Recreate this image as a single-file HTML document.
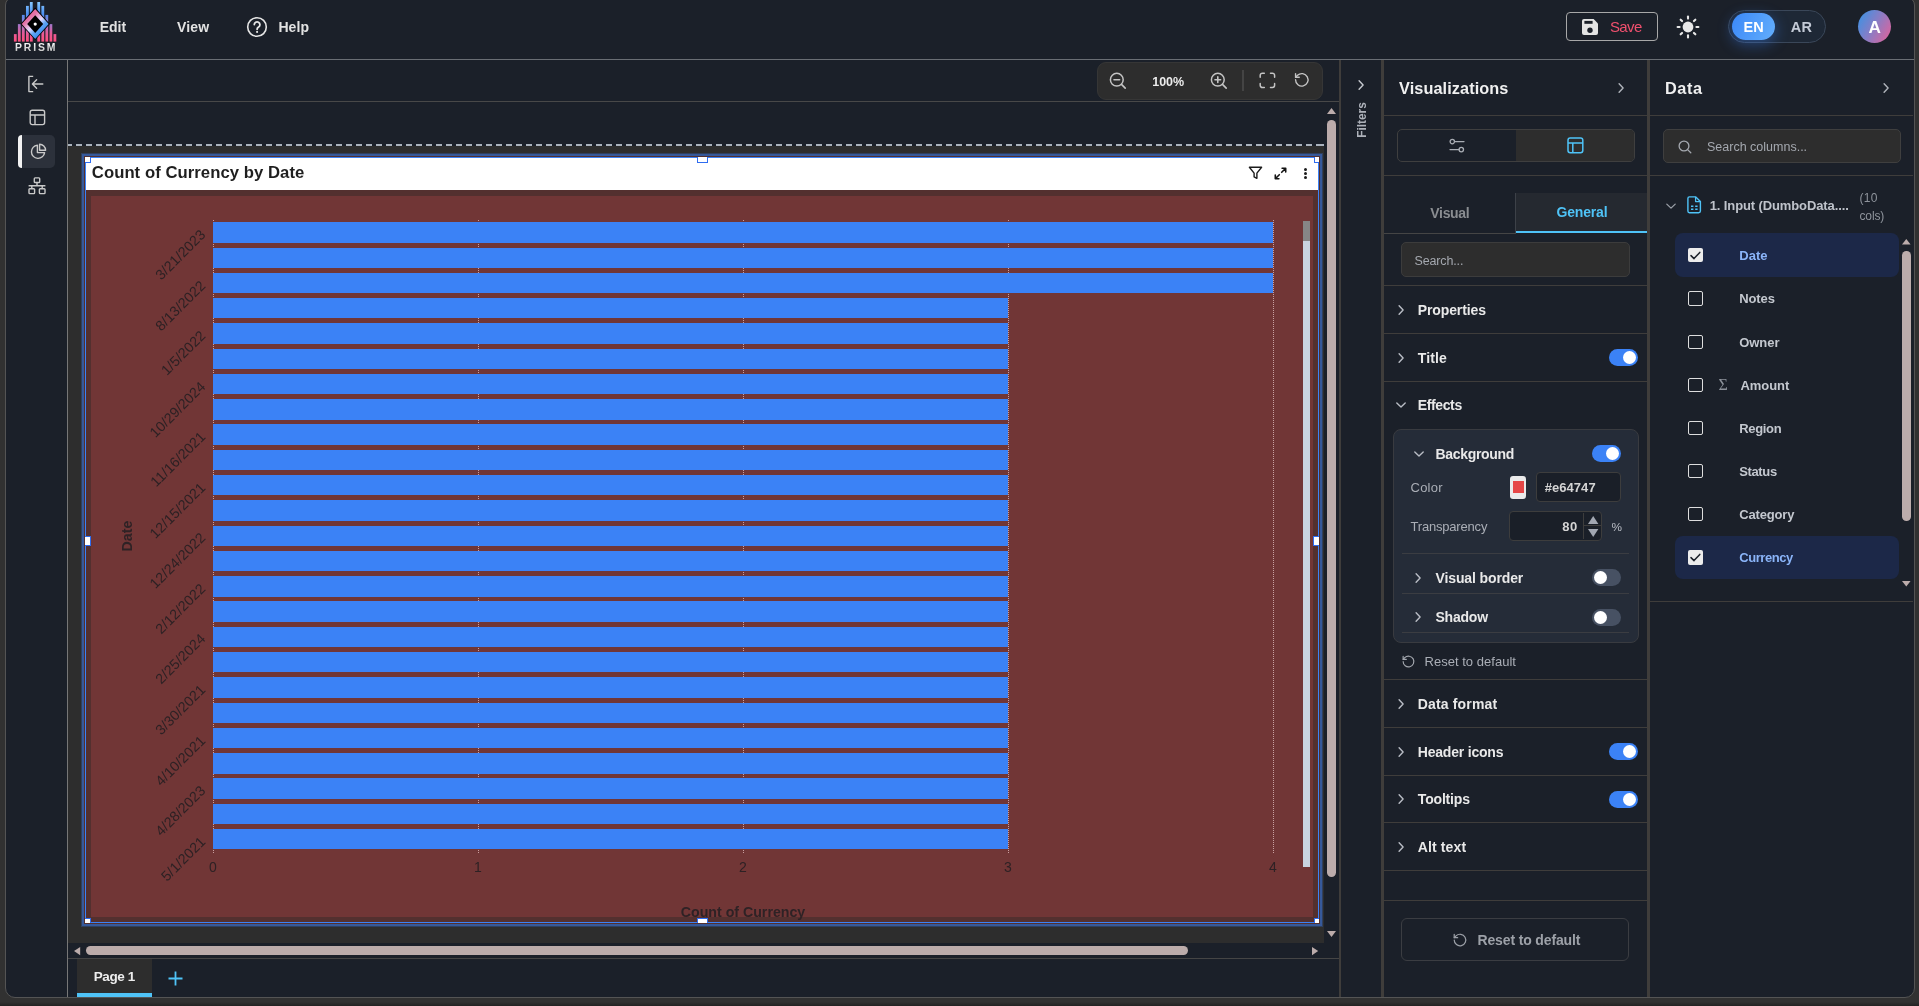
<!DOCTYPE html>
<html lang="en"><head><meta charset="utf-8"><title>PRISM</title>
<style>
html,body{margin:0;padding:0}
body{width:1919px;height:1006px;overflow:hidden;position:relative;background:#313131;font-family:"Liberation Sans", sans-serif;}
#root{position:absolute;left:0;top:0;width:1919px;height:1006px;will-change:transform}
#root>div,#root>svg,.a{position:absolute;box-sizing:border-box}
.t{position:absolute}
svg{overflow:visible}
</style></head><body>
<div id="root">
<div style="left:0;top:1002px;width:1919px;height:4px;background:linear-gradient(#313131,#222)"></div>
<div style="left:5px;top:-3px;width:1910px;height:1001px;border:1px solid #545454;border-radius:8px 8px 10px 10px;background:#1b2029"></div>
<div style="left:6px;top:59px;width:1908px;height:1px;background:#6a6e74;"></div>
<div style="left:67px;top:60px;width:1px;height:937px;background:#777;"></div>
<div style="left:68px;top:101px;width:1271px;height:1px;background:#484848;"></div>
<div style="left:1339px;top:60px;width:2px;height:937px;background:#3f3d3b;"></div>
<div style="left:1381px;top:60px;width:3px;height:937px;background:#3f3d3b;"></div>
<div style="left:1647px;top:60px;width:3px;height:937px;background:#3f3d3b;"></div>
<svg style="left:0px;top:0px;" width="70" height="58" viewBox="0 0 70 58" fill="none"><defs>
<linearGradient id="lgb" gradientUnits="userSpaceOnUse" x1="0" y1="2" x2="0" y2="41.6">
<stop offset="0" stop-color="#86c8ff"/><stop offset="0.3" stop-color="#4a8ff2"/><stop offset="0.55" stop-color="#9a78cc"/><stop offset="0.8" stop-color="#e85a96"/><stop offset="1" stop-color="#ff4f7e"/></linearGradient>
<linearGradient id="lgd" gradientUnits="userSpaceOnUse" x1="26" y1="14" x2="44" y2="34">
<stop offset="0" stop-color="#e5609b"/><stop offset="0.22" stop-color="#e474a8"/><stop offset="0.52" stop-color="#e4dcff"/><stop offset="0.72" stop-color="#5fa4f4"/><stop offset="1" stop-color="#2f86ea"/></linearGradient>
<linearGradient id="lgt" x1="0" y1="0" x2="0" y2="1"><stop offset="0" stop-color="#ffffff"/><stop offset="1" stop-color="#b9b9b9"/></linearGradient>
</defs><rect x="13.9" y="34.1" width="2.8" height="7.5" fill="url(#lgb)"/><rect x="17.9" y="24.1" width="2.8" height="17.5" fill="url(#lgb)"/><rect x="21.9" y="14.9" width="2.8" height="26.7" fill="url(#lgb)"/><rect x="26.0" y="5.9" width="2.8" height="35.7" fill="url(#lgb)"/><rect x="29.9" y="2.0" width="2.8" height="39.6" fill="url(#lgb)"/><rect x="37.3" y="2.0" width="2.8" height="39.6" fill="url(#lgb)"/><rect x="41.4" y="5.9" width="2.8" height="35.7" fill="url(#lgb)"/><rect x="45.4" y="14.9" width="2.8" height="26.7" fill="url(#lgb)"/><rect x="49.5" y="24.1" width="2.8" height="17.5" fill="url(#lgb)"/><rect x="53.5" y="34.1" width="2.8" height="7.5" fill="url(#lgb)"/><polygon points="35.2,7.6 49.9,24 35.2,40 20.5,24" fill="#000"/><polygon points="35.2,9 48.7,24 35.2,38.9 21.7,24" fill="url(#lgd)"/><polygon points="35.2,15.2 43.2,24 35.2,32.9 27.2,24" fill="#000"/><circle cx="35.2" cy="24.1" r="1.6" fill="#fff"/><text x="15" y="51" font-family='"Liberation Sans", sans-serif' font-size="10.4" font-weight="700" letter-spacing="1.9" fill="url(#lgt)">PRISM</text></svg>
<div id="m_edit" class="t" style="left:99.8px;top:16.7px;height:20px;line-height:20px;font-size:14px;font-weight:700;color:#e2e2e2;letter-spacing:-0.037px;white-space:nowrap;">Edit</div>
<div id="m_view" class="t" style="left:176.9px;top:16.7px;height:20px;line-height:20px;font-size:14px;font-weight:700;color:#e2e2e2;letter-spacing:0.162px;white-space:nowrap;">View</div>
<svg style="left:246px;top:16px;" width="22" height="22" viewBox="0 0 22 22" fill="none"><circle cx="11" cy="11" r="9.3" stroke="#e6e6e6" stroke-width="1.6"/><path d="M8.3 8.6a2.8 2.8 0 1 1 4.3 2.4c-.9.6-1.5 1.1-1.5 2.2" stroke="#e6e6e6" stroke-width="1.8" stroke-linecap="round"/><circle cx="11.1" cy="15.9" r="1.05" fill="#e6e6e6"/></svg>
<div id="m_help" class="t" style="left:278.4px;top:16.7px;height:20px;line-height:20px;font-size:14px;font-weight:700;color:#e2e2e2;letter-spacing:0.115px;white-space:nowrap;">Help</div>
<div style="left:1566px;top:12px;width:92px;height:29px;border:1px solid #a8a8a8;border-radius:4px"></div>
<svg style="left:1582px;top:19px;" width="16" height="16" viewBox="0 0 16 16" fill="none"><path d="M0 2a2 2 0 0 1 2-2h9.6L16 4.4V14a2 2 0 0 1-2 2H2a2 2 0 0 1-2-2z" fill="#e4e4e4"/><rect x="2.4" y="1.9" width="8.2" height="2.9" fill="#1b2029"/><circle cx="8" cy="11.2" r="2.7" fill="#1b2029"/></svg>
<div id="save" class="t" style="left:1609.9px;top:17.0px;height:20px;line-height:20px;font-size:15px;font-weight:400;color:#f0506e;letter-spacing:-0.6px;white-space:nowrap;">Save</div>
<svg style="left:1676.3px;top:14.6px;" width="24" height="24" viewBox="0 0 24 24" fill="none"><circle cx="12" cy="12" r="5.4" fill="#e8e8e8"/><line x1="20.40" y1="12.00" x2="22.40" y2="12.00" stroke="#e8e8e8" stroke-width="2.1" stroke-linecap="round"/><line x1="17.94" y1="17.94" x2="19.35" y2="19.35" stroke="#e8e8e8" stroke-width="2.1" stroke-linecap="round"/><line x1="12.00" y1="20.40" x2="12.00" y2="22.40" stroke="#e8e8e8" stroke-width="2.1" stroke-linecap="round"/><line x1="6.06" y1="17.94" x2="4.65" y2="19.35" stroke="#e8e8e8" stroke-width="2.1" stroke-linecap="round"/><line x1="3.60" y1="12.00" x2="1.60" y2="12.00" stroke="#e8e8e8" stroke-width="2.1" stroke-linecap="round"/><line x1="6.06" y1="6.06" x2="4.65" y2="4.65" stroke="#e8e8e8" stroke-width="2.1" stroke-linecap="round"/><line x1="12.00" y1="3.60" x2="12.00" y2="1.60" stroke="#e8e8e8" stroke-width="2.1" stroke-linecap="round"/><line x1="17.94" y1="6.06" x2="19.35" y2="4.65" stroke="#e8e8e8" stroke-width="2.1" stroke-linecap="round"/></svg>
<div style="left:1728px;top:10px;width:98px;height:33px;border:1px solid #3a4759;border-radius:17px;background:#1e2836"></div>
<div style="left:1732px;top:13px;width:43px;height:27px;border-radius:13.5px;background:linear-gradient(115deg,#3b88f8,#63aefc);box-shadow:0 4px 14px 1px rgba(59,130,246,.38)"></div>
<div id="l_en" class="t" style="left:1743.4px;top:17.0px;height:20px;line-height:20px;font-size:14.5px;font-weight:700;color:#fff;letter-spacing:0.225px;white-space:nowrap;">EN</div>
<div id="l_ar" class="t" style="left:1790.8px;top:17.0px;height:20px;line-height:20px;font-size:14.5px;font-weight:700;color:#c3cad6;letter-spacing:0.327px;white-space:nowrap;">AR</div>
<div style="left:1857.7px;top:9.5px;width:33.5px;height:33.5px;border-radius:50%;background:linear-gradient(120deg,#3c92e4 5%,#8b7cc4 50%,#e0639b 95%)"></div>
<div id="av" class="t" style="left:1868.5px;top:16.7px;height:20px;line-height:20px;font-size:17.2px;font-weight:700;color:#fff;letter-spacing:0.488px;white-space:nowrap;">A</div>
<svg style="left:27px;top:75px;" width="18" height="18" viewBox="0 0 18 18" fill="none"><path d="M6.2 1.4H1.9v15.2h4.3" stroke="#c9c9c9" stroke-width="1.4" stroke-linejoin="round"/><path d="M15.8 9H5.6M9.6 4.8L5.4 9l4.2 4.2" stroke="#c9c9c9" stroke-width="1.4" stroke-linecap="round" stroke-linejoin="round"/></svg>
<svg style="left:28.6px;top:109.2px;" width="17" height="17" viewBox="0 0 17 17" fill="none"><rect x="1.2" y="1.2" width="14.4" height="14.4" rx="2" stroke="#c9c9c9" stroke-width="1.4"/><path d="M1.2 6h14.4M6 6v9.6" stroke="#c9c9c9" stroke-width="1.4"/></svg>
<div style="left:18px;top:135px;width:37px;height:33px;border-radius:5px;background:#2c313b"></div>
<div style="left:18px;top:135px;width:4px;height:33px;border-radius:4px 0 0 4px;background:#f2f2f2"></div>
<svg style="left:30px;top:143px;" width="17" height="17" viewBox="0 0 17 17" fill="none"><path d="M7.4 2.2A6.6 6.6 0 1 0 14.6 9.6H7.4z" stroke="#c9c9c9" stroke-width="1.4" stroke-linejoin="round"/><path d="M9.6 1.3a6.2 6.2 0 0 1 6 6H9.6z" stroke="#c9c9c9" stroke-width="1.4" stroke-linejoin="round"/></svg>
<svg style="left:28px;top:177px;" width="18" height="18" viewBox="0 0 18 18" fill="none"><rect x="6.3" y="0.9" width="5.4" height="4.6" rx=".8" stroke="#c9c9c9" stroke-width="1.4"/><rect x="1" y="11.8" width="5.6" height="4.8" rx=".8" stroke="#c9c9c9" stroke-width="1.4"/><rect x="11.4" y="11.8" width="5.6" height="4.8" rx=".8" stroke="#c9c9c9" stroke-width="1.4"/><path d="M9 5.5v3.2M0.6 8.7h16.8M3.8 8.7v3.1M14.2 8.7v3.1" stroke="#c9c9c9" stroke-width="1.4"/></svg>
<div style="left:1097px;top:62px;width:226px;height:38px;border-radius:9px;background:#2d2d2d;border:1px solid #363636"></div>
<svg style="left:1108px;top:71px;" width="20" height="20" viewBox="0 0 20 20" fill="none"><circle cx="8.8" cy="8.7" r="6.4" stroke="#c4c4c4" stroke-width="1.5"/><path d="M13.5 13.4l3.7 3.7M6 8.7h5.6" stroke="#c4c4c4" stroke-width="1.6" stroke-linecap="round"/></svg>
<div id="z100" class="t" style="left:1152.3px;top:71.9px;height:20px;line-height:20px;font-size:12.5px;font-weight:700;color:#ececec;letter-spacing:-0.068px;white-space:nowrap;">100%</div>
<svg style="left:1209.4px;top:71px;" width="20" height="20" viewBox="0 0 20 20" fill="none"><circle cx="8.8" cy="8.7" r="6.4" stroke="#c4c4c4" stroke-width="1.5"/><path d="M13.5 13.4l3.7 3.7M6 8.7h5.6M8.8 5.9v5.6" stroke="#c4c4c4" stroke-width="1.6" stroke-linecap="round"/></svg>
<div style="left:1242.4px;top:70.4px;width:1.2px;height:20.4px;background:#444;"></div>
<svg style="left:1258.7px;top:71.8px;" width="17" height="17" viewBox="0 0 17 17" fill="none"><path d="M1.2 5.2V3.4A2.2 2.2 0 0 1 3.4 1.2h1.9M11.5 1.2h1.9a2.2 2.2 0 0 1 2.2 2.2v1.8M15.6 11.4v1.9a2.2 2.2 0 0 1-2.2 2.2h-1.9M5.3 15.5H3.4a2.2 2.2 0 0 1-2.2-2.2v-1.9" stroke="#c4c4c4" stroke-width="1.5" stroke-linecap="round"/></svg>
<svg style="left:1294.3px;top:72.0px;" width="15.6" height="15.6" viewBox="0 0 16 16" fill="none"><path d="M1.6 8a6.4 6.4 0 1 0 2-4.6L1.6 5.4" stroke="#c4c4c4" stroke-width="1.4" stroke-linecap="round" stroke-linejoin="round"/><path d="M1.6 1.6v3.8h3.8" stroke="#c4c4c4" stroke-width="1.4" stroke-linecap="round" stroke-linejoin="round"/></svg>
<div style="left:68px;top:146px;width:1255.6px;height:797px;background:#2d2d2d;"></div>
<div style="left:68px;top:144px;width:1255.6px;height:2px;background:repeating-linear-gradient(90deg,#a9b2bd 0 6.2px,transparent 6.2px 10px);background-position:-2px 0"></div>
<svg style="left:1327px;top:108px;" width="9" height="6" viewBox="0 0 9 6" fill="none"><path d="M0 6L4.5 0 9 6z" fill="#bcacab"/></svg>
<div style="left:1327px;top:120px;width:9px;height:757px;border-radius:4.5px;background:#bcacab"></div>
<svg style="left:1327px;top:931px;" width="9" height="6" viewBox="0 0 9 6" fill="none"><path d="M0 0h9L4.5 6z" fill="#bcacab"/></svg>
<svg style="left:74px;top:946.9px;" width="6.2" height="8.2" viewBox="0 0 6.2 8.2" fill="none"><path d="M6.2 0v8.2L0 4.1z" fill="#bcacab"/></svg>
<div style="left:86px;top:946px;width:1102px;height:9px;border-radius:4.5px;background:#bcacab"></div>
<svg style="left:1312px;top:946.9px;" width="6.2" height="8.2" viewBox="0 0 6.2 8.2" fill="none"><path d="M0 0v8.2L6.2 4.1z" fill="#bcacab"/></svg>
<div style="left:68px;top:958px;width:1271px;height:1px;background:#454545;"></div>
<div style="left:77px;top:959px;width:75px;height:37px;background:#2d2d2d;"></div>
<div style="left:77px;top:992.5px;width:75px;height:4.0px;background:#4fc3f7;"></div>
<div id="page1" class="t" style="left:93.7px;top:967.0px;height:20px;line-height:20px;font-size:13.5px;font-weight:700;color:#ededed;letter-spacing:-0.407px;white-space:nowrap;">Page 1</div>
<svg style="left:167.5px;top:970.5px;" width="15" height="15" viewBox="0 0 15 15" fill="none"><path d="M7.5 .5v14M.5 7.5h14" stroke="#4fc3f7" stroke-width="1.8"/></svg>
<div style="left:82px;top:154px;width:1240px;height:772px;background:#36599a;box-shadow:0 0 0 1px rgba(54,89,154,.45);"></div>
<div style="left:84px;top:156px;width:1236px;height:768px;background:#53302f;"></div>
<div style="left:85px;top:157px;width:1234px;height:766px;border:1px solid #3b82f6"></div>
<div style="left:86px;top:158px;width:1232px;height:32px;background:#ffffff;"></div>
<div style="left:91px;top:195.8px;width:1222px;height:721.3px;background:#713636;"></div>
<div id="wtitle" class="t" style="left:91.8px;top:163.4px;height:20px;line-height:20px;font-size:16.7px;font-weight:700;color:#1f1f1f;letter-spacing:0.047px;white-space:nowrap;">Count of Currency by Date</div>
<svg style="left:1248px;top:165.5px;" width="15" height="14" viewBox="0 0 15 14" fill="none"><path d="M1.4 1.3h12.2L8.9 7.1v5.2l-2.8-1.4V7.1z" stroke="#1c1c1c" stroke-width="1.4" stroke-linejoin="round"/></svg>
<svg style="left:1273.5px;top:166.5px;" width="13" height="13" viewBox="0 0 13 13" fill="none"><path d="M7.7 5.3L11.7 1.3M8.1 1.3h3.6v3.6M5.3 7.7L1.3 11.7M4.9 11.7H1.3V8.1" stroke="#141414" stroke-width="1.6" stroke-linecap="round" stroke-linejoin="round"/></svg>
<div style="left:1303.7px;top:168.0px;width:3px;height:3px;border-radius:50%;background:#1c1c1c"></div>
<div style="left:1303.7px;top:172.0px;width:3px;height:3px;border-radius:50%;background:#1c1c1c"></div>
<div style="left:1303.7px;top:176.0px;width:3px;height:3px;border-radius:50%;background:#1c1c1c"></div>
<div style="left:213px;top:220px;width:1px;height:633px;background:repeating-linear-gradient(180deg,rgba(255,225,225,.62) 0 1px,transparent 1px 2px)"></div>
<div style="left:478px;top:220px;width:1px;height:633px;background:repeating-linear-gradient(180deg,rgba(255,225,225,.62) 0 1px,transparent 1px 2px)"></div>
<div style="left:743px;top:220px;width:1px;height:633px;background:repeating-linear-gradient(180deg,rgba(255,225,225,.62) 0 1px,transparent 1px 2px)"></div>
<div style="left:1008px;top:220px;width:1px;height:633px;background:repeating-linear-gradient(180deg,rgba(255,225,225,.62) 0 1px,transparent 1px 2px)"></div>
<div style="left:1273px;top:220px;width:1px;height:633px;background:repeating-linear-gradient(180deg,rgba(255,225,225,.62) 0 1px,transparent 1px 2px)"></div>
<div style="left:213px;top:222.23px;width:1060px;height:20.4px;background:#3b82f6;"></div>
<div style="left:213px;top:247.51px;width:1060px;height:20.4px;background:#3b82f6;"></div>
<div style="left:213px;top:272.79px;width:1060px;height:20.4px;background:#3b82f6;"></div>
<div style="left:213px;top:298.07px;width:795px;height:20.4px;background:#3b82f6;"></div>
<div style="left:213px;top:323.35px;width:795px;height:20.4px;background:#3b82f6;"></div>
<div style="left:213px;top:348.63px;width:795px;height:20.4px;background:#3b82f6;"></div>
<div style="left:213px;top:373.91px;width:795px;height:20.4px;background:#3b82f6;"></div>
<div style="left:213px;top:399.19px;width:795px;height:20.4px;background:#3b82f6;"></div>
<div style="left:213px;top:424.47px;width:795px;height:20.4px;background:#3b82f6;"></div>
<div style="left:213px;top:449.75px;width:795px;height:20.4px;background:#3b82f6;"></div>
<div style="left:213px;top:475.03px;width:795px;height:20.4px;background:#3b82f6;"></div>
<div style="left:213px;top:500.31px;width:795px;height:20.4px;background:#3b82f6;"></div>
<div style="left:213px;top:525.59px;width:795px;height:20.4px;background:#3b82f6;"></div>
<div style="left:213px;top:550.87px;width:795px;height:20.4px;background:#3b82f6;"></div>
<div style="left:213px;top:576.15px;width:795px;height:20.4px;background:#3b82f6;"></div>
<div style="left:213px;top:601.43px;width:795px;height:20.4px;background:#3b82f6;"></div>
<div style="left:213px;top:626.71px;width:795px;height:20.4px;background:#3b82f6;"></div>
<div style="left:213px;top:651.99px;width:795px;height:20.4px;background:#3b82f6;"></div>
<div style="left:213px;top:677.27px;width:795px;height:20.4px;background:#3b82f6;"></div>
<div style="left:213px;top:702.55px;width:795px;height:20.4px;background:#3b82f6;"></div>
<div style="left:213px;top:727.83px;width:795px;height:20.4px;background:#3b82f6;"></div>
<div style="left:213px;top:753.11px;width:795px;height:20.4px;background:#3b82f6;"></div>
<div style="left:213px;top:778.39px;width:795px;height:20.4px;background:#3b82f6;"></div>
<div style="left:213px;top:803.67px;width:795px;height:20.4px;background:#3b82f6;"></div>
<div style="left:213px;top:828.95px;width:795px;height:20.4px;background:#3b82f6;"></div>
<div class="t yl" style="right:1715.8px;top:223.94px;height:16px;line-height:16px;font-size:14.2px;letter-spacing:.08px;color:#2d2124;white-space:nowrap;transform-origin:100% 50%;transform:rotate(-45deg)">3/21/2023</div>
<div class="t yl" style="right:1715.8px;top:274.5px;height:16px;line-height:16px;font-size:14.2px;letter-spacing:.08px;color:#2d2124;white-space:nowrap;transform-origin:100% 50%;transform:rotate(-45deg)">8/13/2022</div>
<div class="t yl" style="right:1715.8px;top:325.06px;height:16px;line-height:16px;font-size:14.2px;letter-spacing:.08px;color:#2d2124;white-space:nowrap;transform-origin:100% 50%;transform:rotate(-45deg)">1/5/2022</div>
<div class="t yl" style="right:1715.8px;top:375.62px;height:16px;line-height:16px;font-size:14.2px;letter-spacing:.08px;color:#2d2124;white-space:nowrap;transform-origin:100% 50%;transform:rotate(-45deg)">10/29/2024</div>
<div class="t yl" style="right:1715.8px;top:426.18px;height:16px;line-height:16px;font-size:14.2px;letter-spacing:.08px;color:#2d2124;white-space:nowrap;transform-origin:100% 50%;transform:rotate(-45deg)">11/16/2021</div>
<div class="t yl" style="right:1715.8px;top:476.74px;height:16px;line-height:16px;font-size:14.2px;letter-spacing:.08px;color:#2d2124;white-space:nowrap;transform-origin:100% 50%;transform:rotate(-45deg)">12/15/2021</div>
<div class="t yl" style="right:1715.8px;top:527.3px;height:16px;line-height:16px;font-size:14.2px;letter-spacing:.08px;color:#2d2124;white-space:nowrap;transform-origin:100% 50%;transform:rotate(-45deg)">12/24/2022</div>
<div class="t yl" style="right:1715.8px;top:577.86px;height:16px;line-height:16px;font-size:14.2px;letter-spacing:.08px;color:#2d2124;white-space:nowrap;transform-origin:100% 50%;transform:rotate(-45deg)">2/12/2022</div>
<div class="t yl" style="right:1715.8px;top:628.42px;height:16px;line-height:16px;font-size:14.2px;letter-spacing:.08px;color:#2d2124;white-space:nowrap;transform-origin:100% 50%;transform:rotate(-45deg)">2/25/2024</div>
<div class="t yl" style="right:1715.8px;top:678.98px;height:16px;line-height:16px;font-size:14.2px;letter-spacing:.08px;color:#2d2124;white-space:nowrap;transform-origin:100% 50%;transform:rotate(-45deg)">3/30/2021</div>
<div class="t yl" style="right:1715.8px;top:729.54px;height:16px;line-height:16px;font-size:14.2px;letter-spacing:.08px;color:#2d2124;white-space:nowrap;transform-origin:100% 50%;transform:rotate(-45deg)">4/10/2021</div>
<div class="t yl" style="right:1715.8px;top:780.1px;height:16px;line-height:16px;font-size:14.2px;letter-spacing:.08px;color:#2d2124;white-space:nowrap;transform-origin:100% 50%;transform:rotate(-45deg)">4/28/2023</div>
<div class="t yl" style="right:1715.8px;top:830.66px;height:16px;line-height:16px;font-size:14.2px;letter-spacing:.08px;color:#2d2124;white-space:nowrap;transform-origin:100% 50%;transform:rotate(-45deg)">5/1/2021</div>
<div class="t" style="left:193px;width:40px;text-align:center;top:859.4px;height:16px;line-height:16px;font-size:14px;color:#2d2124">0</div>
<div class="t" style="left:458px;width:40px;text-align:center;top:859.4px;height:16px;line-height:16px;font-size:14px;color:#2d2124">1</div>
<div class="t" style="left:723px;width:40px;text-align:center;top:859.4px;height:16px;line-height:16px;font-size:14px;color:#2d2124">2</div>
<div class="t" style="left:988px;width:40px;text-align:center;top:859.4px;height:16px;line-height:16px;font-size:14px;color:#2d2124">3</div>
<div class="t" style="left:1253px;width:40px;text-align:center;top:859.4px;height:16px;line-height:16px;font-size:14px;color:#2d2124">4</div>
<div class="t" id="xtitle" style="left:643px;width:200px;text-align:center;top:904.2px;height:16px;line-height:16px;font-size:14.2px;font-weight:700;color:#2e2225">Count of Currency</div>
<div class="t" id="ytitle" style="left:77px;width:100px;text-align:center;top:527.5px;height:16px;line-height:16px;font-size:14.2px;font-weight:700;color:#2e2225;transform:rotate(-90deg)">Date</div>
<div style="left:1303px;top:221px;width:7px;height:646px;background:#c9d4e0;"></div>
<div style="left:1303px;top:221px;width:7px;height:20.3px;background:#868686;"></div>
<div style="left:85px;top:157px;width:6px;height:6px;background:#fff;border-right:1px solid #2f6df0;border-bottom:1px solid #2f6df0;"></div>
<div style="left:1314px;top:157px;width:5px;height:6px;background:#fff;border-left:1px solid #2f6df0;border-bottom:1px solid #2f6df0;"></div>
<div style="left:85px;top:918px;width:6px;height:5px;background:#fff;border-top:1px solid #2f6df0;border-right:1px solid #2f6df0;"></div>
<div style="left:1314px;top:918px;width:5px;height:5px;background:#fff;border-top:1px solid #2f6df0;border-left:1px solid #2f6df0;"></div>
<div style="left:697px;top:157px;width:11px;height:6px;background:#fff;border-left:1px solid #2f6df0;border-right:1px solid #2f6df0;border-bottom:1px solid #2f6df0;"></div>
<div style="left:697px;top:918px;width:11px;height:5px;background:#fff;border-left:1px solid #2f6df0;border-right:1px solid #2f6df0;border-top:1px solid #2f6df0;"></div>
<div style="left:85px;top:535.5px;width:6px;height:10.5px;background:#fff;border-top:1px solid #2f6df0;border-right:1px solid #2f6df0;border-bottom:1px solid #2f6df0;"></div>
<div style="left:1313px;top:535.5px;width:6px;height:10.5px;background:#fff;border-top:1px solid #2f6df0;border-left:1px solid #2f6df0;border-bottom:1px solid #2f6df0;"></div>
<svg style="left:1357.3px;top:79.3px;" width="8" height="12" viewBox="0 0 8 12" fill="none"><path d="M2.1 1.8L6.1 6 2.1 10.2" stroke="#c6c9cf" stroke-width="1.4" stroke-linecap="round" stroke-linejoin="round"/></svg>
<div class="t" id="filters" style="left:1332.2px;width:60px;text-align:center;top:111.5px;height:16px;line-height:16px;font-size:11.9px;font-weight:700;letter-spacing:0;color:#aeb2ba;transform:rotate(-90deg)">Filters</div>
<div id="vizt" class="t" style="left:1399px;top:77.9px;height:20px;line-height:20px;font-size:16.3px;font-weight:700;color:#f0f0f0;letter-spacing:0.087px;white-space:nowrap;">Visualizations</div>
<svg style="left:1616.5px;top:81.6px;" width="8" height="12" viewBox="0 0 8 12" fill="none"><path d="M2.1 1.8L6.1 6 2.1 10.2" stroke="#b0b4bb" stroke-width="1.4" stroke-linecap="round" stroke-linejoin="round"/></svg>
<div style="left:1384px;top:115px;width:263px;height:1px;background:#3f3d3b;"></div>
<div style="left:1397px;top:129px;width:238px;height:33px;border:1px solid #3f3f3f;border-radius:5px;overflow:hidden"><div class="a" style="left:118px;top:0;width:120px;height:33px;background:#2d2d2d"></div></div>
<svg style="left:1449px;top:138px;" width="16" height="16" viewBox="0 0 16 16" fill="none"><circle cx="3.3" cy="3.6" r="2.2" stroke="#a9adb4" stroke-width="1.3"/><path d="M5.6 3.6H15" stroke="#a9adb4" stroke-width="1.3" stroke-linecap="round"/><circle cx="12.3" cy="11.6" r="2.2" stroke="#a9adb4" stroke-width="1.3"/><path d="M1 11.6h9" stroke="#a9adb4" stroke-width="1.3" stroke-linecap="round"/></svg>
<svg style="left:1566.5px;top:137.3px;" width="17" height="17" viewBox="0 0 17 17" fill="none"><rect x="1" y="1" width="14.8" height="14.8" rx="2.2" stroke="#4fc3f7" stroke-width="1.5"/><path d="M1 6h14.8M5.8 6v9.8" stroke="#4fc3f7" stroke-width="1.5"/></svg>
<div style="left:1384px;top:175px;width:263px;height:1px;background:#3f3d3b;"></div>
<div style="left:1515px;top:193px;width:1px;height:40px;background:#3d4148;"></div>
<div style="left:1516px;top:193px;width:131px;height:40px;background:#252930;"></div>
<div style="left:1384px;top:233px;width:132px;height:1px;background:#454545;"></div>
<div style="left:1516px;top:230.6px;width:131px;height:2.5px;background:#4fc3f7;"></div>
<div id="t_visual" class="t" style="left:1430.3px;top:203.1px;height:20px;line-height:20px;font-size:14px;font-weight:700;color:#8a8d91;letter-spacing:-0.316px;white-space:nowrap;">Visual</div>
<div id="t_general" class="t" style="left:1556.5px;top:202.1px;height:20px;line-height:20px;font-size:14px;font-weight:700;color:#4fc3f7;letter-spacing:-0.178px;white-space:nowrap;">General</div>
<div style="left:1401px;top:242px;width:229px;height:35px;border:1px solid #3c3c3c;border-radius:5px;background:#2d2d2d"></div>
<div id="v_search" class="t" style="left:1414.6px;top:251.0px;height:20px;line-height:20px;font-size:12.5px;font-weight:400;color:#a4a8af;letter-spacing:-0.158px;white-space:nowrap;">Search...</div>
<div style="left:1384px;top:285.2px;width:263px;height:1.0px;background:#3f3d3b;"></div>
<div id="s_prop" class="t" style="left:1417.8px;top:300.2px;height:20px;line-height:20px;font-size:14px;font-weight:700;color:#e9e9e9;letter-spacing:-0.125px;white-space:nowrap;">Properties</div>
<svg style="left:1397px;top:303.8px;" width="8" height="12" viewBox="0 0 8 12" fill="none"><path d="M2.1 1.8L6.1 6 2.1 10.2" stroke="#b9bdc5" stroke-width="1.4" stroke-linecap="round" stroke-linejoin="round"/></svg>
<div style="left:1384px;top:333px;width:263px;height:1px;background:#3f3d3b;"></div>
<div id="s_title" class="t" style="left:1417.8px;top:348.2px;height:20px;line-height:20px;font-size:14px;font-weight:700;color:#e9e9e9;letter-spacing:0.094px;white-space:nowrap;">Title</div>
<svg style="left:1397px;top:351.6px;" width="8" height="12" viewBox="0 0 8 12" fill="none"><path d="M2.1 1.8L6.1 6 2.1 10.2" stroke="#b9bdc5" stroke-width="1.4" stroke-linecap="round" stroke-linejoin="round"/></svg>
<div style="left:1609px;top:349px;width:29.4px;height:17px;border-radius:8.5px;background:#3b82f6"><div class="a" style="left:14.4px;top:2px;width:13px;height:13px;border-radius:50%;background:#fff"></div></div>
<div style="left:1384px;top:381px;width:263px;height:1px;background:#3f3d3b;"></div>
<div id="s_eff" class="t" style="left:1417.8px;top:395.2px;height:20px;line-height:20px;font-size:14px;font-weight:700;color:#e9e9e9;letter-spacing:-0.384px;white-space:nowrap;">Effects</div>
<svg style="left:1395px;top:401.4px;" width="12" height="8" viewBox="0 0 12 8" fill="none"><path d="M1.8 2.1L6 6.1 10.2 2.1" stroke="#b9bdc5" stroke-width="1.4" stroke-linecap="round" stroke-linejoin="round"/></svg>
<div style="left:1393px;top:429px;width:246px;height:214px;border:1px solid #393b40;border-radius:8px;background:#252c38"></div>
<svg style="left:1412.5px;top:449.8px;" width="12" height="8" viewBox="0 0 12 8" fill="none"><path d="M1.8 2.1L6 6.1 10.2 2.1" stroke="#b9bdc5" stroke-width="1.4" stroke-linecap="round" stroke-linejoin="round"/></svg>
<div id="c_bg" class="t" style="left:1435.5px;top:443.5px;height:20px;line-height:20px;font-size:14px;font-weight:700;color:#e9e9e9;letter-spacing:-0.308px;white-space:nowrap;">Background</div>
<div style="left:1591.5px;top:444.7px;width:29.4px;height:17px;border-radius:8.5px;background:#3b82f6"><div class="a" style="left:14.4px;top:2px;width:13px;height:13px;border-radius:50%;background:#fff"></div></div>
<div id="c_color" class="t" style="left:1410.5px;top:478.0px;height:20px;line-height:20px;font-size:13px;font-weight:400;color:#aaaeb6;letter-spacing:0.245px;white-space:nowrap;">Color</div>
<div style="left:1510px;top:476px;width:16px;height:23.4px;border-radius:3px;background:#ebebeb"></div>
<div style="left:1512.6px;top:480.5px;width:11.2px;height:12.9px;background:#e64747;"></div>
<div style="left:1536px;top:472px;width:85px;height:30px;border:1px solid #3d3d3d;border-radius:4px;background:#1a1f28"></div>
<div id="c_hex" class="t" style="left:1544.7px;top:478.0px;height:20px;line-height:20px;font-size:13px;font-weight:700;color:#d4d4d4;letter-spacing:0.054px;white-space:nowrap;">#e64747</div>
<div id="c_transp" class="t" style="left:1410.5px;top:517.3px;height:20px;line-height:20px;font-size:13px;font-weight:400;color:#aaaeb6;letter-spacing:-0.192px;white-space:nowrap;">Transparency</div>
<div style="left:1509.3px;top:511px;width:93px;height:30px;border:1px solid #3d3d3d;border-radius:4px;background:#1a1f28"></div>
<div style="left:1582.6px;top:513px;width:0.8px;height:25.5px;background:#3d3d3d;"></div>
<div id="c_80" class="t" style="left:1562.3px;top:517.3px;height:20px;line-height:20px;font-size:13px;font-weight:700;color:#d4d4d4;letter-spacing:0.516px;white-space:nowrap;">80</div>
<svg style="left:1588.2px;top:516.3px;" width="10.4" height="8" viewBox="0 0 10.4 8" fill="none"><path d="M0 8L5.2 0l5.2 8z" fill="#a2a7b2"/></svg>
<svg style="left:1588.2px;top:528.9px;" width="10.4" height="8" viewBox="0 0 10.4 8" fill="none"><path d="M0 0h10.4L5.2 8z" fill="#a2a7b2"/></svg>
<div style="left:1583.4px;top:525.2px;width:18.1px;height:0.8px;background:#3d3d3d;"></div>
<div id="c_pct" class="t" style="left:1611.4px;top:517.3px;height:20px;line-height:20px;font-size:11.8px;font-weight:400;color:#b8bcc4;letter-spacing:-1.125px;white-space:nowrap;">%</div>
<div style="left:1402px;top:553px;width:227px;height:1px;background:#3b3d42;"></div>
<svg style="left:1414px;top:571.8px;" width="8" height="12" viewBox="0 0 8 12" fill="none"><path d="M2.1 1.8L6.1 6 2.1 10.2" stroke="#b9bdc5" stroke-width="1.4" stroke-linecap="round" stroke-linejoin="round"/></svg>
<div id="c_vb" class="t" style="left:1435.5px;top:567.8px;height:20px;line-height:20px;font-size:14px;font-weight:700;color:#e9e9e9;letter-spacing:-0.117px;white-space:nowrap;">Visual border</div>
<div style="left:1591.5px;top:569px;width:29.4px;height:17px;border-radius:8.5px;background:#475163"><div class="a" style="left:2px;top:2px;width:13px;height:13px;border-radius:50%;background:#fff"></div></div>
<div style="left:1402px;top:593.2px;width:227px;height:1.0px;background:#3b3d42;"></div>
<svg style="left:1414px;top:611.3px;" width="8" height="12" viewBox="0 0 8 12" fill="none"><path d="M2.1 1.8L6.1 6 2.1 10.2" stroke="#b9bdc5" stroke-width="1.4" stroke-linecap="round" stroke-linejoin="round"/></svg>
<div id="c_sh" class="t" style="left:1435.5px;top:607.2px;height:20px;line-height:20px;font-size:14px;font-weight:700;color:#e9e9e9;letter-spacing:-0.228px;white-space:nowrap;">Shadow</div>
<div style="left:1591.5px;top:608.6px;width:29.4px;height:17px;border-radius:8.5px;background:#475163"><div class="a" style="left:2px;top:2px;width:13px;height:13px;border-radius:50%;background:#fff"></div></div>
<div style="left:1402px;top:632.2px;width:227px;height:1.0px;background:#3b3d42;"></div>
<svg style="left:1401.5px;top:654.5px;" width="13" height="13" viewBox="0 0 16 16" fill="none"><path d="M1.4 8a6.6 6.6 0 1 0 2-4.7L1.4 5.4" stroke="#a4a8af" stroke-width="1.4" stroke-linecap="round" stroke-linejoin="round"/><path d="M1.4 1.5v3.9h3.9" stroke="#a4a8af" stroke-width="1.4" stroke-linecap="round" stroke-linejoin="round"/></svg>
<div id="r_link" class="t" style="left:1424.5px;top:651.7px;height:20px;line-height:20px;font-size:13px;font-weight:400;color:#aaaeb6;letter-spacing:0.027px;white-space:nowrap;">Reset to default</div>
<div style="left:1384px;top:679px;width:263px;height:1px;background:#3f3d3b;"></div>
<div id="s_df" class="t" style="left:1417.8px;top:693.6px;height:20px;line-height:20px;font-size:14px;font-weight:700;color:#e9e9e9;letter-spacing:0.155px;white-space:nowrap;">Data format</div>
<svg style="left:1397px;top:697.6px;" width="8" height="12" viewBox="0 0 8 12" fill="none"><path d="M2.1 1.8L6.1 6 2.1 10.2" stroke="#b9bdc5" stroke-width="1.4" stroke-linecap="round" stroke-linejoin="round"/></svg>
<div style="left:1384px;top:727px;width:263px;height:1px;background:#3f3d3b;"></div>
<div id="s_hi" class="t" style="left:1417.8px;top:741.6px;height:20px;line-height:20px;font-size:14px;font-weight:700;color:#e9e9e9;letter-spacing:-0.203px;white-space:nowrap;">Header icons</div>
<svg style="left:1397px;top:745.6px;" width="8" height="12" viewBox="0 0 8 12" fill="none"><path d="M2.1 1.8L6.1 6 2.1 10.2" stroke="#b9bdc5" stroke-width="1.4" stroke-linecap="round" stroke-linejoin="round"/></svg>
<div style="left:1609px;top:743px;width:29.4px;height:17px;border-radius:8.5px;background:#3b82f6"><div class="a" style="left:14.4px;top:2px;width:13px;height:13px;border-radius:50%;background:#fff"></div></div>
<div style="left:1384px;top:774.6px;width:263px;height:1.0px;background:#3f3d3b;"></div>
<div id="s_tt" class="t" style="left:1417.8px;top:789.2px;height:20px;line-height:20px;font-size:14px;font-weight:700;color:#e9e9e9;letter-spacing:-0.176px;white-space:nowrap;">Tooltips</div>
<svg style="left:1397px;top:793.2px;" width="8" height="12" viewBox="0 0 8 12" fill="none"><path d="M2.1 1.8L6.1 6 2.1 10.2" stroke="#b9bdc5" stroke-width="1.4" stroke-linecap="round" stroke-linejoin="round"/></svg>
<div style="left:1609px;top:790.6px;width:29.4px;height:17px;border-radius:8.5px;background:#3b82f6"><div class="a" style="left:14.4px;top:2px;width:13px;height:13px;border-radius:50%;background:#fff"></div></div>
<div style="left:1384px;top:822.4px;width:263px;height:1.0px;background:#3f3d3b;"></div>
<div id="s_alt" class="t" style="left:1417.8px;top:836.8px;height:20px;line-height:20px;font-size:14px;font-weight:700;color:#e9e9e9;letter-spacing:0.118px;white-space:nowrap;">Alt text</div>
<svg style="left:1397px;top:840.8px;" width="8" height="12" viewBox="0 0 8 12" fill="none"><path d="M2.1 1.8L6.1 6 2.1 10.2" stroke="#b9bdc5" stroke-width="1.4" stroke-linecap="round" stroke-linejoin="round"/></svg>
<div style="left:1384px;top:869.8px;width:263px;height:1.0px;background:#3f3d3b;"></div>
<div style="left:1384px;top:900px;width:263px;height:1px;background:#3f3d3b;"></div>
<div style="left:1401.4px;top:918.4px;width:228px;height:43px;border:1px solid #3b3d42;border-radius:6px"></div>
<svg style="left:1453.0px;top:933.0px;" width="14" height="14" viewBox="0 0 16 16" fill="none"><path d="M1.4 8a6.6 6.6 0 1 0 2-4.7L1.4 5.4" stroke="#9da1a8" stroke-width="1.4" stroke-linecap="round" stroke-linejoin="round"/><path d="M1.4 1.5v3.9h3.9" stroke="#9da1a8" stroke-width="1.4" stroke-linecap="round" stroke-linejoin="round"/></svg>
<div id="r_btn" class="t" style="left:1477.5px;top:929.8px;height:20px;line-height:20px;font-size:14px;font-weight:700;color:#9da1a8;letter-spacing:-0.139px;white-space:nowrap;">Reset to default</div>
<div id="datat" class="t" style="left:1665px;top:77.9px;height:20px;line-height:20px;font-size:16.3px;font-weight:700;color:#f0f0f0;letter-spacing:0.551px;white-space:nowrap;">Data</div>
<svg style="left:1882.3px;top:81.6px;" width="8" height="12" viewBox="0 0 8 12" fill="none"><path d="M2.1 1.8L6.1 6 2.1 10.2" stroke="#b0b4bb" stroke-width="1.4" stroke-linecap="round" stroke-linejoin="round"/></svg>
<div style="left:1650px;top:115px;width:263px;height:1px;background:#3f3d3b;"></div>
<div style="left:1663.3px;top:129.2px;width:237.4px;height:33.6px;border:1px solid #3f3f3f;border-radius:5px;background:#2d2d2d"></div>
<svg style="left:1678px;top:139.6px;" width="14" height="14" viewBox="0 0 14 14" fill="none"><circle cx="6" cy="6" r="4.9" stroke="#a4a8af" stroke-width="1.3"/><path d="M9.6 9.6l3.2 3.2" stroke="#a4a8af" stroke-width="1.3" stroke-linecap="round"/></svg>
<div id="d_search" class="t" style="left:1707px;top:137.0px;height:20px;line-height:20px;font-size:12.5px;font-weight:400;color:#a4a8af;letter-spacing:0.003px;white-space:nowrap;">Search columns...</div>
<div style="left:1650px;top:175px;width:263px;height:1px;background:#3f3d3b;"></div>
<svg style="left:1664.8px;top:201.9px;" width="12" height="8" viewBox="0 0 12 8" fill="none"><path d="M1.8 2.1L6 6.1 10.2 2.1" stroke="#9a9fa7" stroke-width="1.3" stroke-linecap="round" stroke-linejoin="round"/></svg>
<svg style="left:1687.3px;top:196px;" width="14.5" height="17.6" viewBox="0 0 14.5 17.6" fill="none"><path d="M2.4 .9h6.4l4.6 4.6v9.4a1.8 1.8 0 0 1-1.8 1.8H2.4A1.6 1.6 0 0 1 .9 15.1V2.4A1.5 1.5 0 0 1 2.4 .9z" stroke="#4fc3f7" stroke-width="1.4" stroke-linejoin="round"/><path d="M8.6 1v4.6h4.6" stroke="#4fc3f7" stroke-width="1.3" stroke-linejoin="round"/><path d="M4 10.2h2.4M8.2 10.2h2.4M4 13.2h2.4M8.2 13.2h2.4" stroke="#4fc3f7" stroke-width="1.4"/></svg>
<div id="d_src" class="t" style="left:1709.7px;top:196.3px;height:20px;line-height:20px;font-size:13px;font-weight:700;color:#bfc3cb;letter-spacing:-0.111px;white-space:nowrap;">1. Input (DumboData....</div>
<div id="d_10" class="t" style="left:1859.4px;top:187.9px;height:20px;line-height:20px;font-size:12px;font-weight:400;color:#8f949c;letter-spacing:0.35px;white-space:nowrap;">(10</div>
<div id="d_cols" class="t" style="left:1859.4px;top:205.5px;height:20px;line-height:20px;font-size:12px;font-weight:400;color:#8f949c;letter-spacing:-0.09px;white-space:nowrap;">cols)</div>
<div style="left:1675px;top:233.10000000000002px;width:224px;height:43.8px;border-radius:8px;background:#1c2848"></div>
<div style="left:1688.2px;top:247.9px;width:14.6px;height:14.6px;border-radius:2px;background:#ececec"></div>
<svg style="left:1688.2px;top:247.9px;" width="14.6" height="14.6" viewBox="0 0 14.6 14.6" fill="none"><path d="M3 7.6l3 3 5.8-6.2" stroke="#1b2029" stroke-width="1.5" stroke-linecap="round" stroke-linejoin="round"/></svg>
<div id="d_Date" class="t" style="left:1739.2px;top:246.0px;height:20px;line-height:20px;font-size:13px;font-weight:700;color:#8ab4f8;letter-spacing:0.078px;white-space:nowrap;">Date</div>
<div style="left:1688.2px;top:291.0px;width:14.6px;height:14.6px;border-radius:2px;border:1.9px solid #dedede"></div>
<div id="d_Notes" class="t" style="left:1739.2px;top:289.1px;height:20px;line-height:20px;font-size:13px;font-weight:700;color:#c4c8cf;letter-spacing:-0.104px;white-space:nowrap;">Notes</div>
<div style="left:1688.2px;top:334.8px;width:14.6px;height:14.6px;border-radius:2px;border:1.9px solid #dedede"></div>
<div id="d_Owner" class="t" style="left:1739.2px;top:332.9px;height:20px;line-height:20px;font-size:13px;font-weight:700;color:#c4c8cf;letter-spacing:-0.051px;white-space:nowrap;">Owner</div>
<div style="left:1688.2px;top:377.6px;width:14.6px;height:14.6px;border-radius:2px;border:1.9px solid #dedede"></div>
<div id="d_Amount" class="t" style="left:1740.4px;top:375.7px;height:20px;line-height:20px;font-size:13px;font-weight:700;color:#c4c8cf;letter-spacing:-0.051px;white-space:nowrap;">Amount</div>
<div style="left:1688.2px;top:420.6px;width:14.6px;height:14.6px;border-radius:2px;border:1.9px solid #dedede"></div>
<div id="d_Region" class="t" style="left:1739.2px;top:418.7px;height:20px;line-height:20px;font-size:13px;font-weight:700;color:#c4c8cf;letter-spacing:-0.326px;white-space:nowrap;">Region</div>
<div style="left:1688.2px;top:463.70000000000005px;width:14.6px;height:14.6px;border-radius:2px;border:1.9px solid #dedede"></div>
<div id="d_Status" class="t" style="left:1739.2px;top:461.8px;height:20px;line-height:20px;font-size:13px;font-weight:700;color:#c4c8cf;letter-spacing:-0.357px;white-space:nowrap;">Status</div>
<div style="left:1688.2px;top:506.9px;width:14.6px;height:14.6px;border-radius:2px;border:1.9px solid #dedede"></div>
<div id="d_Category" class="t" style="left:1739.2px;top:505.0px;height:20px;line-height:20px;font-size:13px;font-weight:700;color:#c4c8cf;letter-spacing:-0.157px;white-space:nowrap;">Category</div>
<div style="left:1675px;top:535.5px;width:224px;height:43.8px;border-radius:8px;background:#1c2848"></div>
<div style="left:1688.2px;top:550.3000000000001px;width:14.6px;height:14.6px;border-radius:2px;background:#ececec"></div>
<svg style="left:1688.2px;top:550.3000000000001px;" width="14.6" height="14.6" viewBox="0 0 14.6 14.6" fill="none"><path d="M3 7.6l3 3 5.8-6.2" stroke="#1b2029" stroke-width="1.5" stroke-linecap="round" stroke-linejoin="round"/></svg>
<div id="d_Currency" class="t" style="left:1739.2px;top:548.4px;height:20px;line-height:20px;font-size:13px;font-weight:700;color:#8ab4f8;letter-spacing:-0.436px;white-space:nowrap;">Currency</div>
<div class="t" id="sigma" style="left:1718.6px;top:375px;height:20px;line-height:20px;font-size:16px;color:#8d929b;font-family:'Liberation Serif',serif">&Sigma;</div>
<svg style="left:1902.3px;top:238.9px;" width="8.6" height="5.6" viewBox="0 0 8.6 5.6" fill="none"><path d="M0 5.6L4.3 0l4.3 5.6z" fill="#bcacab"/></svg>
<div style="left:1902px;top:251px;width:8.8px;height:269.5px;border-radius:4.4px;background:#bcacab"></div>
<svg style="left:1902.3px;top:581px;" width="8.6" height="5.6" viewBox="0 0 8.6 5.6" fill="none"><path d="M0 0h8.6L4.3 5.6z" fill="#bcacab"/></svg>
<div style="left:1650px;top:601.3px;width:263px;height:1.0px;background:#3f3d3b;"></div>
</div>
</body></html>
